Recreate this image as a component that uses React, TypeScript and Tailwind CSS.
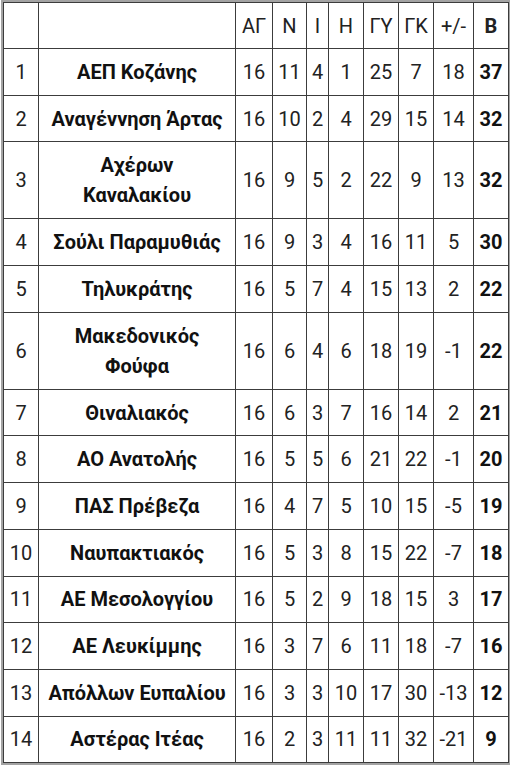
import React from 'react';

type Row = {
  pos: number;
  team: string[];
  ag: number;
  n: number;
  i: number;
  h: number;
  gy: number;
  gk: number;
  diff: number;
  b: number;
};

const rows: Row[] = [
  { pos: 1, team: ['ΑΕΠ Κοζάνης'], ag: 16, n: 11, i: 4, h: 1, gy: 25, gk: 7, diff: 18, b: 37 },
  { pos: 2, team: ['Αναγέννηση Άρτας'], ag: 16, n: 10, i: 2, h: 4, gy: 29, gk: 15, diff: 14, b: 32 },
  { pos: 3, team: ['Αχέρων', 'Καναλακίου'], ag: 16, n: 9, i: 5, h: 2, gy: 22, gk: 9, diff: 13, b: 32 },
  { pos: 4, team: ['Σούλι Παραμυθιάς'], ag: 16, n: 9, i: 3, h: 4, gy: 16, gk: 11, diff: 5, b: 30 },
  { pos: 5, team: ['Τηλυκράτης'], ag: 16, n: 5, i: 7, h: 4, gy: 15, gk: 13, diff: 2, b: 22 },
  { pos: 6, team: ['Μακεδονικός', 'Φούφα'], ag: 16, n: 6, i: 4, h: 6, gy: 18, gk: 19, diff: -1, b: 22 },
  { pos: 7, team: ['Θιναλιακός'], ag: 16, n: 6, i: 3, h: 7, gy: 16, gk: 14, diff: 2, b: 21 },
  { pos: 8, team: ['ΑΟ Ανατολής'], ag: 16, n: 5, i: 5, h: 6, gy: 21, gk: 22, diff: -1, b: 20 },
  { pos: 9, team: ['ΠΑΣ Πρέβεζα'], ag: 16, n: 4, i: 7, h: 5, gy: 10, gk: 15, diff: -5, b: 19 },
  { pos: 10, team: ['Ναυπακτιακός'], ag: 16, n: 5, i: 3, h: 8, gy: 15, gk: 22, diff: -7, b: 18 },
  { pos: 11, team: ['ΑΕ Μεσολογγίου'], ag: 16, n: 5, i: 2, h: 9, gy: 18, gk: 15, diff: 3, b: 17 },
  { pos: 12, team: ['ΑΕ Λευκίμμης'], ag: 16, n: 3, i: 7, h: 6, gy: 11, gk: 18, diff: -7, b: 16 },
  { pos: 13, team: ['Απόλλων Ευπαλίου'], ag: 16, n: 3, i: 3, h: 10, gy: 17, gk: 30, diff: -13, b: 12 },
  { pos: 14, team: ['Αστέρας Ιτέας'], ag: 16, n: 2, i: 3, h: 11, gy: 11, gk: 32, diff: -21, b: 9 },
];

const cell = 'border border-[#3c3c3c] text-center align-middle p-0 leading-[30px]';

export default function App() {
  return (
    <div
      className="w-[510px] h-[768px] bg-white text-[#222] text-[20px] overflow-hidden"
      style={{ fontFamily: 'Roboto, "Noto Sans", sans-serif' }}
    >
      <div className="ml-px w-[509px] border-2 border-[#a3a3a3]">
        <table className="w-[505px] table-fixed border-collapse">
          <colgroup>
            <col className="w-[35px]" />
            <col className="w-[197px]" />
            <col className="w-[37px]" />
            <col className="w-[34px]" />
            <col className="w-[22px]" />
            <col className="w-[35px]" />
            <col className="w-[35px]" />
            <col className="w-[35px]" />
            <col className="w-[40px]" />
            <col className="w-[35px]" />
          </colgroup>
          <thead>
            <tr className="h-[46px]">
              <th className={cell}></th>
              <th className={cell}></th>
              <th className={`${cell} font-normal`}>ΑΓ</th>
              <th className={`${cell} font-normal`}>Ν</th>
              <th className={`${cell} font-normal`}>Ι</th>
              <th className={`${cell} font-normal`}>Η</th>
              <th className={`${cell} font-normal`}>ΓΥ</th>
              <th className={`${cell} font-normal`}>ΓΚ</th>
              <th className={`${cell} font-normal`}>+/-</th>
              <th className={`${cell} font-bold`}>Β</th>
            </tr>
          </thead>
          <tbody>
            {rows.map((r) => (
              <tr key={r.pos} className={r.team.length > 1 ? 'h-[77px]' : 'h-[46.7px]'}>
                <td className={cell}>{r.pos}</td>
                <td className={`${cell} font-bold text-[#111]`}>
                  {r.team.map((t, idx) => (
                    <div key={idx}>{t}</div>
                  ))}
                </td>
                <td className={cell}>{r.ag}</td>
                <td className={cell}>{r.n}</td>
                <td className={cell}>{r.i}</td>
                <td className={cell}>{r.h}</td>
                <td className={cell}>{r.gy}</td>
                <td className={cell}>{r.gk}</td>
                <td className={cell}>{r.diff}</td>
                <td className={`${cell} font-bold text-[#111]`}>{r.b}</td>
              </tr>
            ))}
          </tbody>
        </table>
      </div>
    </div>
  );
}
